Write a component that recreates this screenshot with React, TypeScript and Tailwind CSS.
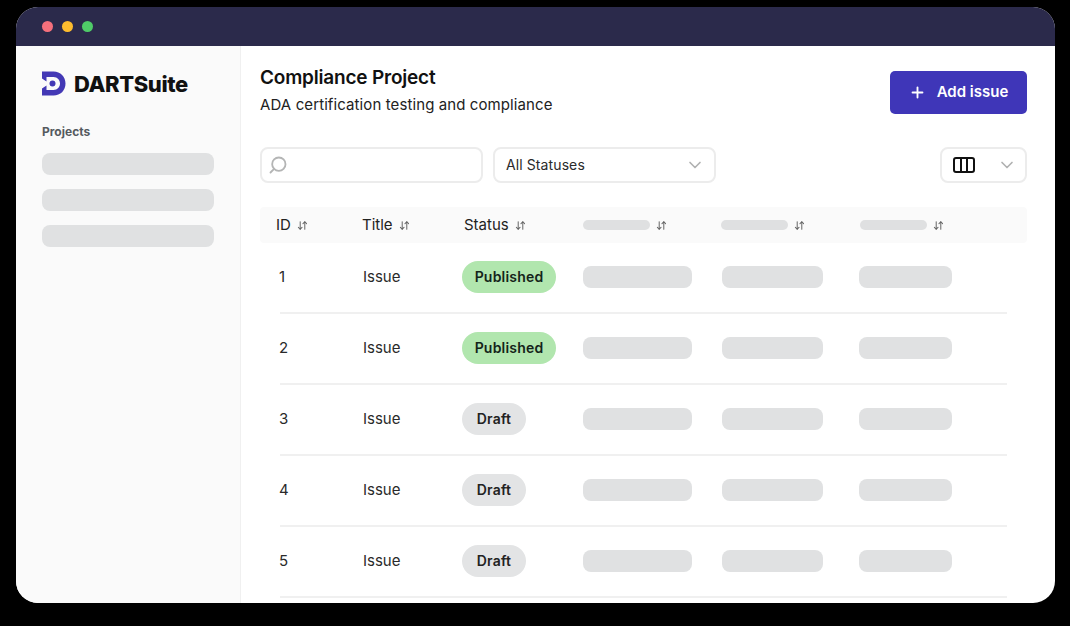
import { ArrowDownUp, ChevronDown, Plus, Search } from "lucide-react";

function Sort() {
  return <ArrowDownUp size={11} strokeWidth={2.2} className="text-[#666666] shrink-0" />;
}

function Logo() {
  return (
    <svg width="24" height="25" viewBox="0 0 24 25" fill="none" className="shrink-0">
      <path
        d="M0 0.5H11.5C18.5 0.5 23.5 5.5 23.5 12.5C23.5 19.5 18.5 24.5 11.5 24.5H0V17.5L4.5 14.5V19H11.5C15.5 19 18 16 18 12.5C18 9 15.5 6 11.5 6H4.5V10.5L0 7.5Z"
        fill="#4338b5"
      />
      <circle cx="10.5" cy="12.5" r="3" fill="#4338b5" />
    </svg>
  );
}

function HeaderCell({ label, width }: { label?: string; width?: string }) {
  return (
    <div className="flex items-center gap-[6px]">
      {label ? (
        <span className="text-[15px] text-[#222222]">{label}</span>
      ) : (
        <span className={`h-[10px] rounded-full bg-[#dfe0e1] ${width ?? ""}`} />
      )}
      <Sort />
    </div>
  );
}

function Row({ id, status }: { id: number; status: "Published" | "Draft" }) {
  const published = status === "Published";
  return (
    <div className="mx-5 h-[71px] shrink-0 grid grid-cols-[83px_99px_121px_139px_137px_1fr] items-center border-b-2 border-[#f0f0f0] text-[15px] text-[#2a2a2a] pb-[1px]">
      <span className="-ml-px">{id}</span>
      <span>Issue</span>
      <span>
        <span
          className={
            published
              ? "inline-flex h-8 w-[94px] items-center justify-center rounded-full bg-[#b1e6ae] text-sm font-semibold text-[#14241a] tracking-[0.2px]"
              : "inline-flex h-8 w-[64px] items-center justify-center rounded-full bg-[#e3e4e5] text-sm font-semibold text-[#222222] tracking-[0.2px]"
          }
        >
          {status}
        </span>
      </span>
      <span className="h-[22px] w-[109px] rounded-lg bg-[#e0e1e2]" />
      <span className="h-[22px] w-[101px] rounded-lg bg-[#e0e1e2]" />
      <span className="h-[22px] w-[93px] rounded-lg bg-[#e0e1e2]" />
    </div>
  );
}

export default function App() {
  const rows: { id: number; status: "Published" | "Draft" }[] = [
    { id: 1, status: "Published" },
    { id: 2, status: "Published" },
    { id: 3, status: "Draft" },
    { id: 4, status: "Draft" },
    { id: 5, status: "Draft" },
  ];
  return (
    <div className="h-[626px] w-[1070px] overflow-hidden bg-black pt-[7px] pl-4 font-['Inter',sans-serif]">
      <div className="flex h-[596px] w-[1039px] flex-col overflow-hidden rounded-[22px] bg-white">
        <div className="flex h-[39px] shrink-0 items-center gap-[9px] bg-[#2b2a4b] pl-[26px]">
          <span className="h-[11px] w-[11px] rounded-full bg-[#f5707c]" />
          <span className="h-[11px] w-[11px] rounded-full bg-[#fdbc2e]" />
          <span className="h-[11px] w-[11px] rounded-full bg-[#4fcb68]" />
        </div>
        <div className="flex min-h-0 flex-1">
          <aside className="flex w-[225px] shrink-0 flex-col border-r border-[#f0f0f0] bg-[#fafafa] px-[26px] pt-[25px]">
            <div className="flex h-[25px] items-center gap-2">
              <Logo />
              <span className="text-[22px] font-extrabold leading-none tracking-[-0.4px] text-[#111111]">DARTSuite</span>
            </div>
            <div className="mt-[24px] text-xs font-bold leading-[24px] text-[#555a5f]">Projects</div>
            <div className="mt-[9px] flex w-[172px] flex-col gap-[14px]">
              <div className="h-[22px] rounded-lg bg-[#e0e1e2]" />
              <div className="h-[22px] rounded-lg bg-[#e0e1e2]" />
              <div className="h-[22px] rounded-lg bg-[#e0e1e2]" />
            </div>
          </aside>
          <main className="flex min-w-0 flex-1 flex-col pl-[19px] pr-[28px]">
            <div className="flex h-[101px] shrink-0 items-start justify-between">
              <div className="pt-[20px]">
                <h1 className="text-[19px] font-semibold leading-[24px] tracking-[-0.2px] text-[#111111]">Compliance Project</h1>
                <p className="mt-[3px] text-[15px] leading-[24px] tracking-[0.1px] text-[#222222]">ADA certification testing and compliance</p>
              </div>
              <button className="mt-[25px] flex h-[43px] w-[137px] items-center justify-center gap-[11px] rounded-[5px] bg-[#3f36b8] text-[15px] font-semibold text-white">
                <Plus size={17} strokeWidth={2.6} />
                Add issue
              </button>
            </div>
            <div className="flex h-[36px] shrink-0 items-stretch gap-[10px]">
              <div className="flex w-[223px] items-center rounded-lg border-2 border-[#ececec] pl-[6px]">
                <Search size={20} strokeWidth={2.2} className="text-[#b4b5b5] -scale-x-100" />
              </div>
              <div className="flex w-[223px] items-center justify-between rounded-lg border-2 border-[#ececec] pl-[11px] pr-[9px] text-sm tracking-[0.1px] text-[#2a2a2a]">
                All Statuses
                <ChevronDown size={20} strokeWidth={2} className="text-[#b0b1b1]" />
              </div>
              <div className="ml-auto flex w-[87px] items-center justify-between rounded-lg border-2 border-[#ececec] pl-[11px] pr-[8px]">
                <svg width="22" height="16" viewBox="0 0 22 16" fill="none" stroke="#111111" strokeWidth="2">
                  <rect x="1" y="1" width="20" height="14" rx="2" />
                  <path d="M8 1V15M14 1V15" />
                </svg>
                <ChevronDown size={20} strokeWidth={2} className="text-[#b0b1b1]" />
              </div>
            </div>
            <div className="mt-[24px] grid h-[36px] shrink-0 grid-cols-[86px_102px_119px_138px_139px_1fr] items-center rounded bg-[#fafafa] pl-4">
              <HeaderCell label="ID" />
              <HeaderCell label="Title" />
              <HeaderCell label="Status" />
              <HeaderCell width="w-[67px]" />
              <HeaderCell width="w-[67px]" />
              <HeaderCell width="w-[67px]" />
            </div>
            <div className="flex flex-col">
              {rows.map((r) => (
                <Row key={r.id} id={r.id} status={r.status} />
              ))}
            </div>
          </main>
        </div>
      </div>
    </div>
  );
}
